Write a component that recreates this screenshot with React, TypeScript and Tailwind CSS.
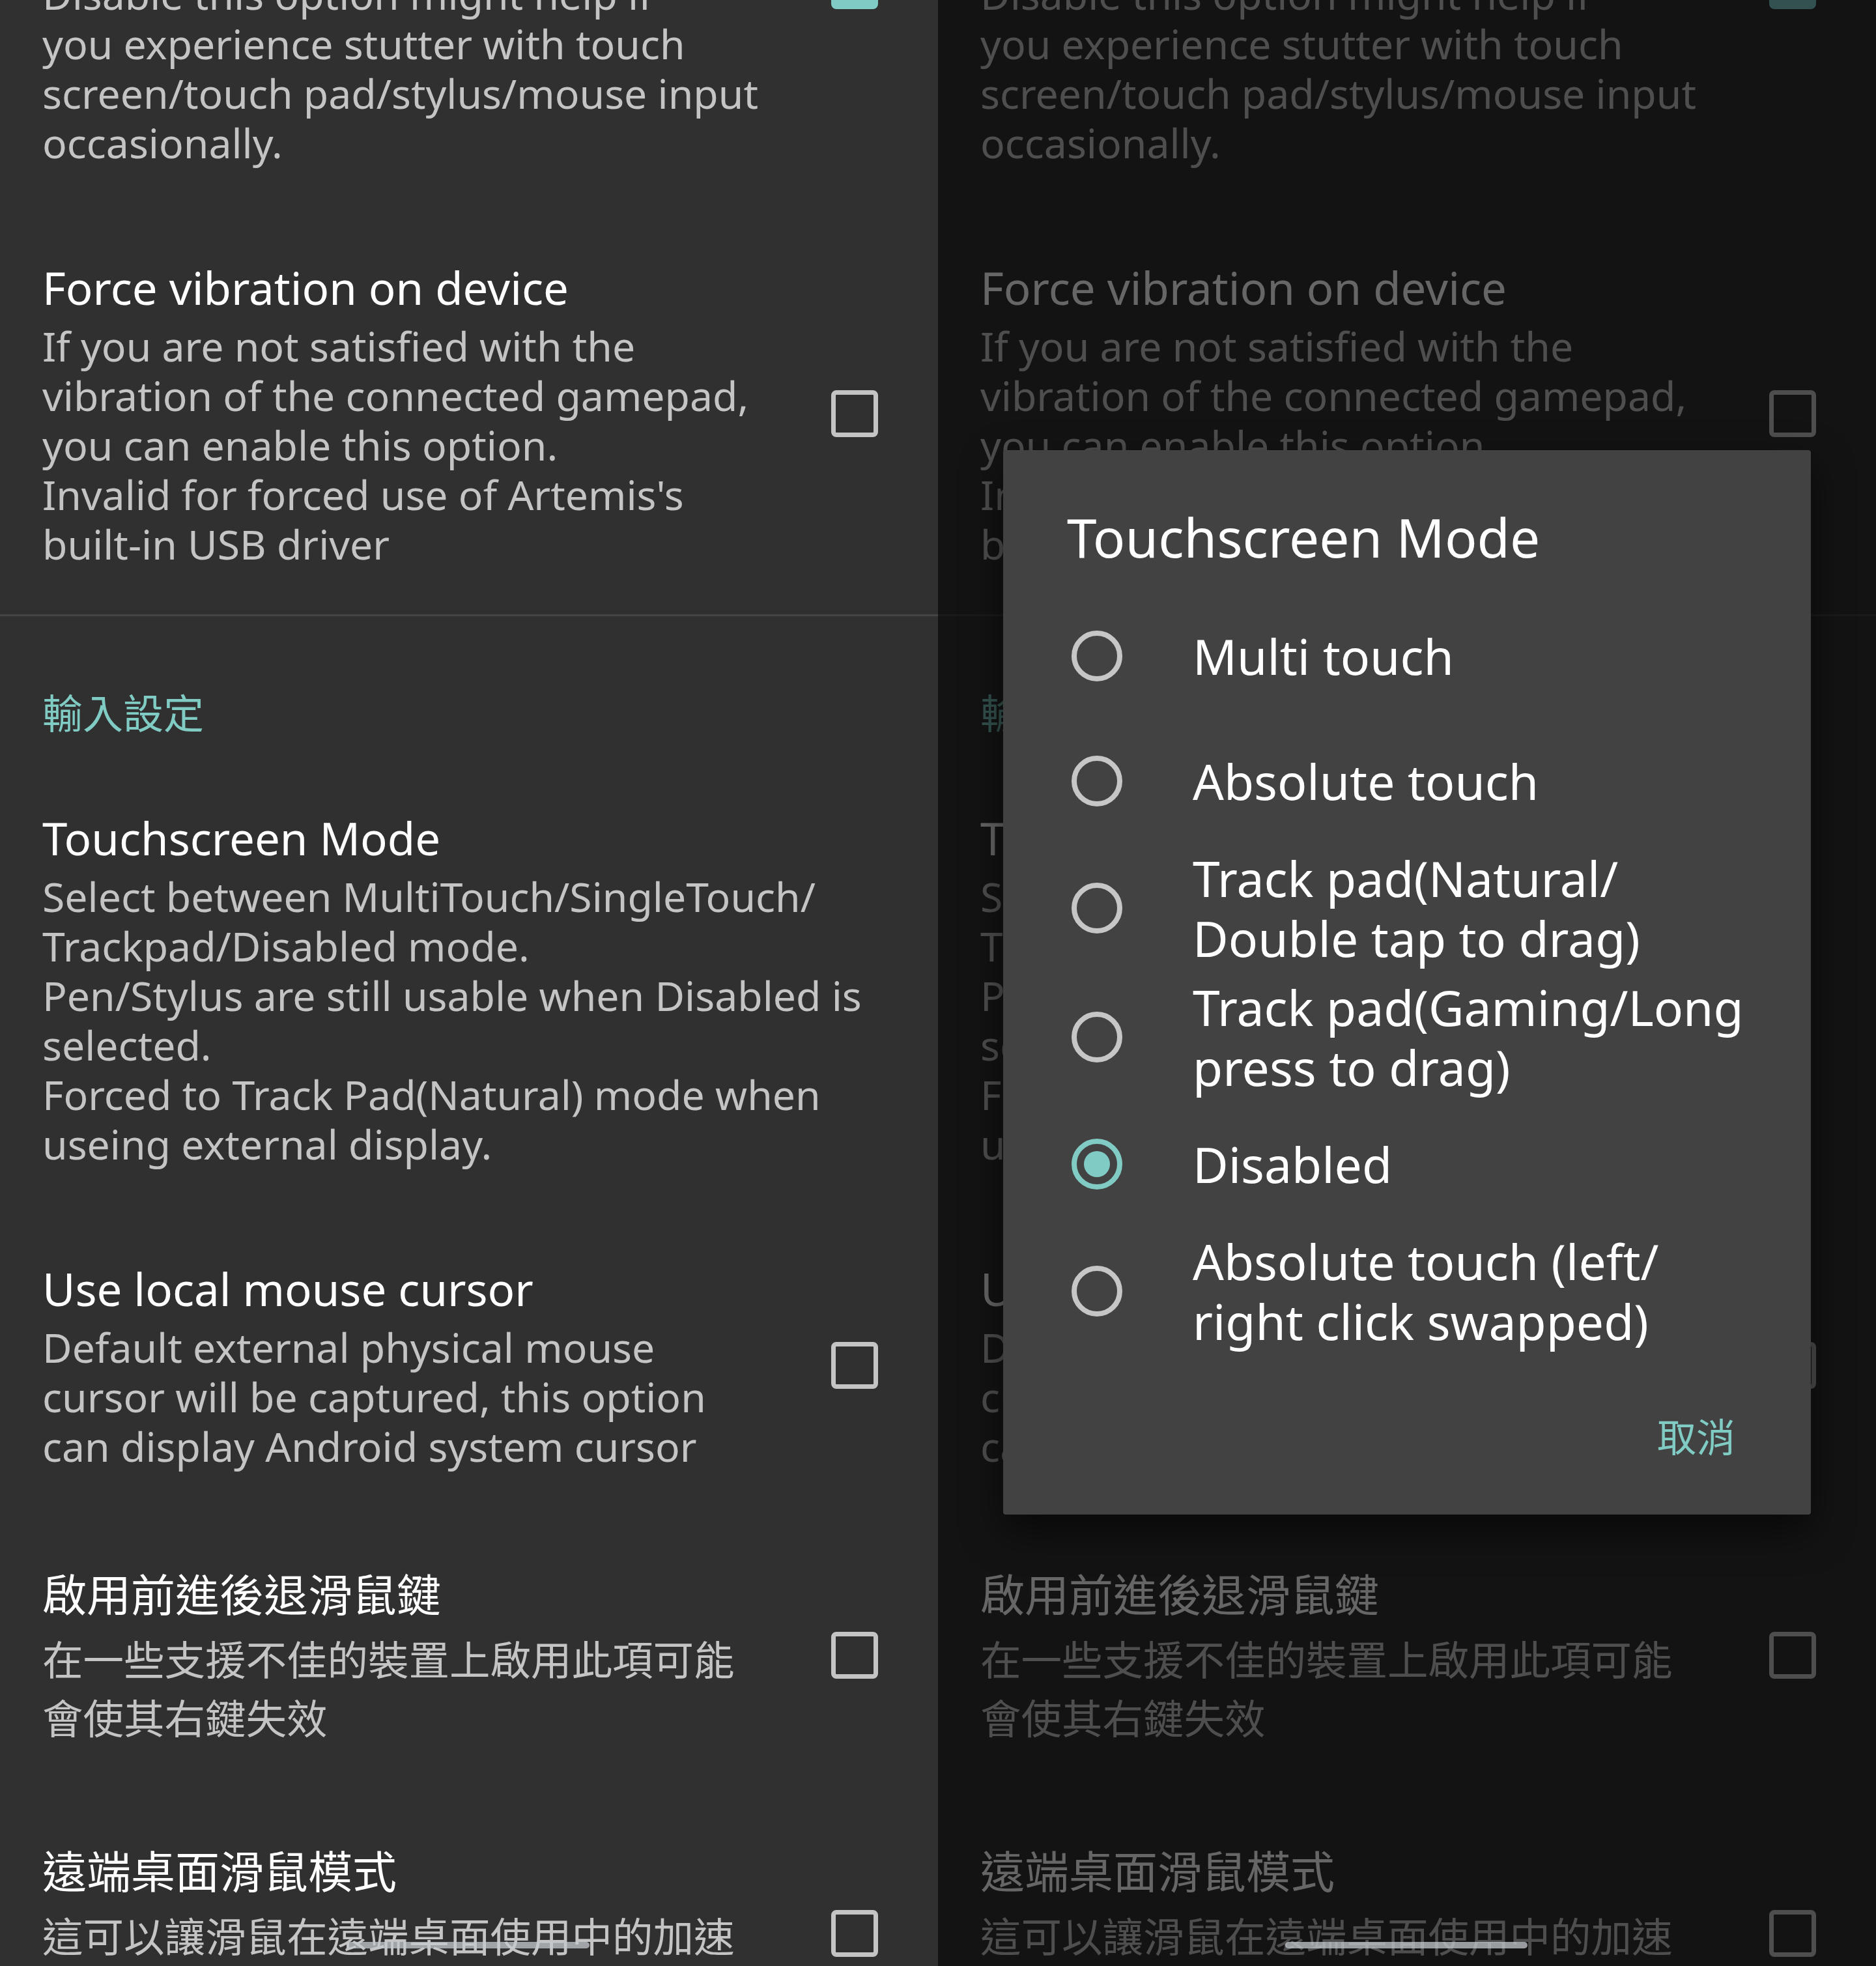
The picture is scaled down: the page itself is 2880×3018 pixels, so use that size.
import React from "react";

function Checkbox({ checked = false }: { checked?: boolean }) {
  if (checked) {
    return (
      <div className="w-[72px] h-[72px] shrink-0 rounded-[8px] bg-[#80cbc4] flex items-center justify-center">
        <svg width="52" height="52" viewBox="0 0 24 24">
          <path d="M4 12.5l5 5L20 6.5" fill="none" stroke="#303030" strokeWidth="3" />
        </svg>
      </div>
    );
  }
  return <div className="w-[72px] h-[72px] shrink-0 rounded-[8px] border-[7px] border-[#c4c4c4]" />;
}

function Radio({ checked = false }: { checked?: boolean }) {
  return checked ? (
    <div className="w-[78px] h-[78px] shrink-0 rounded-full border-[8px] border-[#80cbc4] flex items-center justify-center">
      <div className="w-[40px] h-[40px] rounded-full bg-[#80cbc4]" />
    </div>
  ) : (
    <div className="w-[78px] h-[78px] shrink-0 rounded-full border-[8px] border-[#c6c6c6]" />
  );
}

function Lines({ lines, cjk = false }: { lines: string[]; cjk?: boolean }) {
  return (
    <div className={cjk ? "mt-[5px] text-[62.5px] leading-[90px] text-[#c4c4c4]" : "mt-[8px] text-[62.5px] leading-[76px] text-[#c4c4c4]"}>
      {lines.map((l, i) => (
        <div key={i} className="whitespace-nowrap">
          {l}
        </div>
      ))}
    </div>
  );
}

function Pref({
  title,
  lines,
  checkbox,
  cjk = false,
  minDesc = false,
}: {
  title: string;
  lines: string[];
  checkbox?: boolean;
  cjk?: boolean;
  minDesc?: boolean;
}) {
  return (
    <div className="flex items-center pl-[65px] pr-[92px] py-[70px]">
      <div className="flex-1 min-w-0">
        <div className={cjk ? "text-[68px] leading-[100px] text-white whitespace-nowrap" : "text-[69px] leading-[88px] text-white whitespace-nowrap"}>
          {title}
        </div>
        <div className={minDesc ? "min-h-[185px]" : ""}>
          <Lines lines={lines} cjk={cjk} />
        </div>
      </div>
      {checkbox !== undefined && <Checkbox checked={checkbox} />}
    </div>
  );
}

function SettingsList() {
  return (
    <div className="-mt-[47px]">
      <div className="flex pl-[65px] pr-[92px] pb-[70px]">
        <div className="flex-1 text-[62.5px] leading-[76px] text-[#c4c4c4]">
          <div className="whitespace-nowrap">Disable this option might help if</div>
          <div className="whitespace-nowrap">you experience stutter with touch</div>
          <div className="whitespace-nowrap">screen/touch pad/stylus/mouse input</div>
          <div className="whitespace-nowrap">occasionally.</div>
        </div>
        <div className="self-start -mt-[11px]">
          <Checkbox checked />
        </div>
      </div>

      <Pref
        title="Force vibration on device"
        lines={[
          "If you are not satisfied with the",
          "vibration of the connected gamepad,",
          "you can enable this option.",
          "Invalid for forced use of Artemis's",
          "built-in USB driver",
        ]}
        checkbox={false}
      />

      <div className="h-[3px] bg-[#444444]" />

      <div className="pl-[65px] pt-[114px] pb-[42px] text-[62px] leading-[70px] text-[#80cbc4]">輸入設定</div>

      <Pref
        title="Touchscreen Mode"
        lines={[
          "Select between MultiTouch/SingleTouch/",
          "Trackpad/Disabled mode.",
          "Pen/Stylus are still usable when Disabled is",
          "selected.",
          "Forced to Track Pad(Natural) mode when",
          "useing external display.",
        ]}
      />

      <Pref
        title="Use local mouse cursor"
        lines={[
          "Default external physical mouse",
          "cursor will be captured, this option",
          "can display Android system cursor",
        ]}
        checkbox={false}
      />

      <Pref
        title="啟用前進後退滑鼠鍵"
        lines={["在一些支援不佳的裝置上啟用此項可能", "會使其右鍵失效"]}
        checkbox={false}
        cjk
      />

      <Pref
        title="遠端桌面滑鼠模式"
        lines={["這可以讓滑鼠在遠端桌面使用中的加速"]}
        checkbox={false}
        cjk
        minDesc
      />
    </div>
  );
}

const OPTIONS: { lines: string[]; checked?: boolean }[] = [
  { lines: ["Multi touch"] },
  { lines: ["Absolute touch"] },
  { lines: ["Track pad(Natural/", "Double tap to drag)"] },
  { lines: ["Track pad(Gaming/Long", "press to drag)"] },
  { lines: ["Disabled"], checked: true },
  { lines: ["Absolute touch (left/", "right click swapped)"] },
];

function Dialog() {
  return (
    <div className="absolute left-[100px] top-[691px] w-[1240px] rounded-[4px] bg-[#424242] shadow-[0_24px_60px_rgba(0,0,0,0.55)]">
      <div className="pl-[98px] pt-[83px] text-[82px] leading-[100px] text-white whitespace-nowrap">Touchscreen Mode</div>
      <div className="mt-[37px]">
        {OPTIONS.map((o, i) => (
          <div key={i} className="flex items-center min-h-[192px] py-[7px] pl-[105px] gap-[108px]">
            <Radio checked={o.checked} />
            <div className="text-[75px] leading-[92px] text-white">
              {o.lines.map((l, j) => (
                <div key={j} className="whitespace-nowrap">
                  {l}
                </div>
              ))}
            </div>
          </div>
        ))}
      </div>
      <div className="flex justify-end pr-[116px] mt-[85px] pb-[79px]">
        <div className="text-[60px] leading-[80px] text-[#80cbc4]">取消</div>
      </div>
    </div>
  );
}

function Panel({ dim = false }: { dim?: boolean }) {
  return (
    <div className="relative w-[1440px] h-[3018px] shrink-0 overflow-hidden bg-[#303030]">
      <SettingsList />
      {dim && <div className="absolute inset-0 bg-black/60" />}
      {dim && <Dialog />}
      <div className="absolute bottom-[27px] left-[533px] w-[372px] h-[10px] rounded-full bg-[#c6cad0]/75" />
    </div>
  );
}

export default function App() {
  return (
    <div className="flex w-[2880px] h-[3018px] overflow-hidden font-['Noto_Sans','Noto_Sans_CJK_TC',sans-serif]">
      <Panel />
      <Panel dim />
    </div>
  );
}
